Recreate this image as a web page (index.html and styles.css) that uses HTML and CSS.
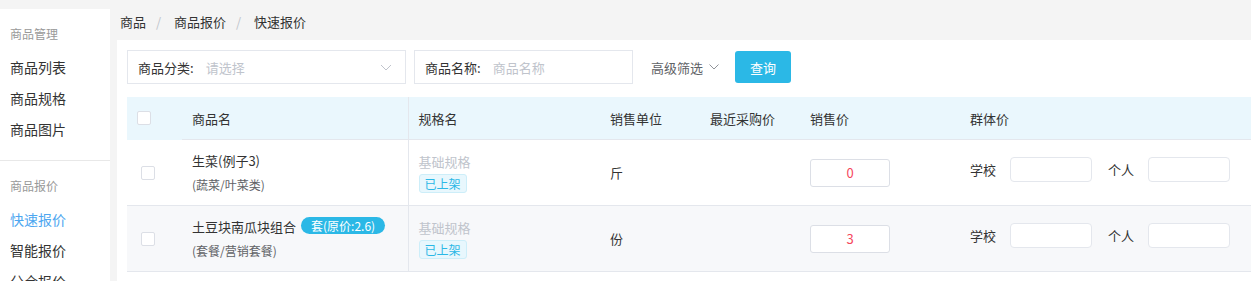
FILE: index.html
```html
<!DOCTYPE html>
<html lang="zh-CN">
<head>
    <meta charset="UTF-8">
    <meta name="viewport" content="width=device-width, initial-scale=1.0">
    <title>快速报价</title>
    <link rel="stylesheet" href="styles.css">
</head>
<body>
<div class="layout">
    <aside class="sidebar">
        <div class="menu-group">
            <div class="menu-title">商品管理</div>
            <a class="menu-item">商品列表</a>
            <a class="menu-item">商品规格</a>
            <a class="menu-item">商品图片</a>
        </div>
        <div class="menu-group">
            <div class="menu-title">商品报价</div>
            <a class="menu-item active">快速报价</a>
            <a class="menu-item">智能报价</a>
            <a class="menu-item">分仓报价</a>
        </div>
    </aside>

    <main class="main">
        <div class="breadcrumb">
            <span>商品</span><span class="sep">/</span>
            <span>商品报价</span><span class="sep">/</span>
            <span>快速报价</span>
        </div>

        <section class="panel">
            <div class="filters">
                <div class="field field-category">
                    <span class="field-label">商品分类:</span>
                    <span class="placeholder">请选择</span>
                    <svg class="chevron" width="12" height="7" viewBox="0 0 12 7"><path d="M1 1l5 5 5-5" fill="none" stroke="#c0c4cc" stroke-width="1"/></svg>
                </div>
                <div class="field field-name">
                    <span class="field-label">商品名称:</span>
                    <span class="placeholder">商品名称</span>
                </div>
                <div class="advanced">
                    高级筛选
                    <svg width="10" height="6" viewBox="0 0 10 6"><path d="M0.5 0.5l4.5 4.5 4.5-4.5" fill="none" stroke="#909399" stroke-width="1"/></svg>
                </div>
                <button class="btn-query">查询</button>
            </div>

            <table class="goods-table">
                <colgroup>
                    <col style="width: 55px">
                    <col style="width: 226px">
                    <col style="width: 192px">
                    <col style="width: 100px">
                    <col style="width: 100px">
                    <col style="width: 160px">
                    <col>
                </colgroup>
                <thead>
                    <tr>
                        <th class="col-check"><span class="checkbox"></span></th>
                        <th class="col-name">商品名</th>
                        <th>规格名</th>
                        <th>销售单位</th>
                        <th>最近采购价</th>
                        <th>销售价</th>
                        <th>群体价</th>
                    </tr>
                </thead>
                <tbody>
                    <tr>
                        <td class="col-check"><span class="checkbox"></span></td>
                        <td class="col-name">
                            <div class="goods-name">生菜(例子3)</div>
                            <div class="goods-cat">(蔬菜/叶菜类)</div>
                        </td>
                        <td>
                            <div class="spec">基础规格</div>
                            <span class="tag">已上架</span>
                        </td>
                        <td>斤</td>
                        <td></td>
                        <td><input class="price-input" value="0"></td>
                        <td>
                            <div class="group-prices">
                                <span>学校</span><input class="group-input">
                                <span>个人</span><input class="group-input">
                            </div>
                        </td>
                    </tr>
                    <tr class="striped">
                        <td class="col-check"><span class="checkbox"></span></td>
                        <td class="col-name">
                            <div class="goods-name">土豆块南瓜块组合<span class="pill">套(原价:2.6)</span></div>
                            <div class="goods-cat">(套餐/营销套餐)</div>
                        </td>
                        <td>
                            <div class="spec">基础规格</div>
                            <span class="tag">已上架</span>
                        </td>
                        <td>份</td>
                        <td></td>
                        <td><input class="price-input" value="3"></td>
                        <td>
                            <div class="group-prices">
                                <span>学校</span><input class="group-input">
                                <span>个人</span><input class="group-input">
                            </div>
                        </td>
                    </tr>
                </tbody>
            </table>
        </section>
    </main>
</div>
</body>
</html>
```

FILE: styles.css
```css
body {
    margin: 0;
    background-color: #f4f4f4;
    font-family: "Noto Sans CJK SC", "Microsoft YaHei", sans-serif;
    font-size: 13px;
    color: #333;
    overflow: hidden;
}
.layout {
    display: flex;
    height: 100vh;
}
.sidebar {
    width: 110px;
    flex-shrink: 0;
    margin-top: 9px;
    background: #ffffff;
}
.menu-group {
    padding: 15px 0 15px 10px;
}
.menu-group + .menu-group {
    border-top: 1px solid #e8e8e8;
}
.menu-title {
    font-size: 12px;
    line-height: 20px;
    color: #999;
    margin-bottom: 8px;
}
.menu-item {
    display: block;
    font-size: 14px;
    line-height: 31px;
    color: #333;
}
.menu-item.active {
    color: #4ea7f0;
}
.main {
    flex: 1;
    margin-left: 7px;
    display: flex;
    flex-direction: column;
    min-width: 0;
}
.breadcrumb {
    flex-shrink: 0;
    padding: 12px 0 0 3px;
    line-height: 20px;
    height: 28px;
    color: #333;
}
.breadcrumb .sep {
    color: #c0c4cc;
    margin: 0 10px;
}
.panel {
    flex: 1;
    background: #ffffff;
    padding: 10px 0 0 10px;
}
.filters {
    display: flex;
    align-items: center;
    height: 34px;
    margin-bottom: 13px;
}
.field {
    display: flex;
    align-items: center;
    box-sizing: border-box;
    height: 34px;
    padding-left: 10px;
    border: 1px solid #e4e7ed;
    margin-right: 8px;
}
.field-category {
    width: 279px;
    padding-right: 13px;
}
.field-name {
    width: 219px;
}
.field-label {
    color: #333;
    margin-right: 12px;
}
.placeholder {
    color: #c0c4cc;
    flex: 1;
}
.advanced {
    display: flex;
    align-items: center;
    gap: 6px;
    margin-left: 10px;
    color: #606266;
}
.btn-query {
    margin-left: 16px;
    width: 56px;
    height: 32px;
    border: none;
    border-radius: 3px;
    background-color: #2bb8e6;
    color: white;
    font-family: inherit;
    font-size: 13px;
    cursor: pointer;
}
.goods-table {
    width: 100%;
    table-layout: fixed;
    border-collapse: collapse;
}
.goods-table th {
    height: 42px;
    padding: 0 10px;
    text-align: left;
    font-weight: normal;
    background: #eaf7fd;
    border-bottom: 1px solid #e4e7ed;
}
.goods-table th.col-check {
    border-bottom-color: #eaf7fd;
}
.goods-table td {
    height: 65px;
    padding: 0 10px;
    border-bottom: 1px solid #e4e7ed;
    vertical-align: middle;
}
.goods-table .col-name {
    border-right: 1px solid #e4e7ed;
}
.goods-table td.col-check {
    padding-left: 14px;
}
.goods-table tr.striped td {
    background: #f7f8fa;
}
.checkbox {
    display: block;
    width: 12px;
    height: 12px;
    border: 1px solid #dcdfe6;
    border-radius: 2px;
    background: #fff;
}
.goods-name {
    line-height: 20px;
}
.goods-cat {
    font-size: 12px;
    line-height: 18px;
    margin-top: 5px;
    color: #606266;
}
.pill {
    display: inline-block;
    margin-left: 5px;
    padding: 0 10px;
    height: 17px;
    line-height: 17px;
    border-radius: 9px;
    background: #2bb8e6;
    color: #fff;
    font-size: 12px;
    vertical-align: 1px;
}
.spec {
    color: #c0c4cc;
    line-height: 20px;
}
.tag {
    display: inline-block;
    margin-top: 2px;
    padding: 0 5px;
    height: 17px;
    line-height: 17px;
    font-size: 12px;
    color: #2bb8e6;
    background: #e8f7fd;
    border: 1px solid #cdeef9;
    border-radius: 3px;
}
.price-input {
    box-sizing: border-box;
    width: 80px;
    height: 28px;
    border: 1px solid #dcdfe6;
    border-radius: 3px;
    text-align: center;
    color: #f5475c;
    font-family: inherit;
    font-size: 13px;
    background: #fff;
}
.group-prices {
    display: flex;
    align-items: center;
    white-space: nowrap;
    margin-bottom: 7px;
}
.group-prices span {
    flex-shrink: 0;
}
.group-input {
    flex-shrink: 0;
    box-sizing: border-box;
    width: 82px;
    height: 25px;
    margin: 0 16px 0 14px;
    border: 1px solid #e4e7ed;
    border-radius: 4px;
    background: #fff;
}
.group-input:last-child {
    margin-right: 0;
}
```
